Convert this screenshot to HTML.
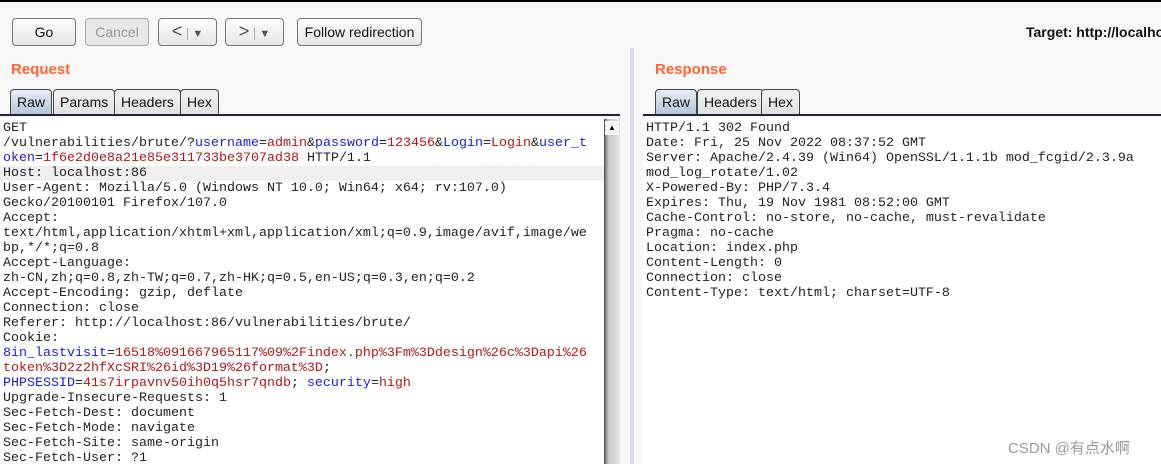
<!DOCTYPE html>
<html><head><meta charset="utf-8"><style>
*{margin:0;padding:0;box-sizing:border-box}
html,body{width:1161px;height:464px;overflow:hidden}
body{background:#f8f8f8;font-family:"Liberation Sans",Arial,sans-serif;position:relative;border-top:2px solid #000}
.btn{position:absolute;top:16px;height:28px;border:1px solid #777;border-radius:4px;background:linear-gradient(#fdfdfd,#e6e6e6);font-size:14px;text-align:center;line-height:26px;color:#111}
.dis{color:#999;border-color:#aaa;background:#e8e8e8}
.title{position:absolute;top:59px;color:#ff6633;font-weight:bold;font-size:15px}
.tab{position:absolute;top:87px;height:26px;border:1px solid #444;border-bottom:none;border-radius:4px 4px 0 0;background:linear-gradient(#f4f4f4,#e0e0e0);font-size:14px;line-height:25px;padding:0 6px;color:#111}
.tab.sel{background:linear-gradient(#e8eef4,#b0c4d8)}
.line{position:absolute;top:112px;height:2px;background:#223}
.code{position:absolute;top:116px;padding-top:3px;background:#fff;font-family:"Liberation Mono","Courier New",monospace;font-size:13.33px;line-height:15px;color:#222;overflow:hidden}
.code div{height:15px;padding-left:3px;white-space:pre}
.b{color:#1a1adc}.r{color:#b01818}
</style></head><body>
<div class="btn" style="left:12px;width:64px">Go</div>
<div class="btn dis" style="left:85px;width:64px">Cancel</div>
<div class="btn" style="left:158px;width:59px;font-size:18px;line-height:24px;color:#555">&lt; <span style="font-size:11px;border-left:1px solid #aaa;padding-left:4px">▼</span></div>
<div class="btn" style="left:225px;width:59px;font-size:18px;line-height:24px;color:#555">&gt; <span style="font-size:11px;border-left:1px solid #aaa;padding-left:4px">▼</span></div>
<div class="btn" style="left:297px;width:125px">Follow redirection</div>
<div style="position:absolute;left:1026px;top:22px;font-weight:bold;font-size:14px;color:#111;white-space:nowrap">Target: http://localhost</div>
<div style="position:absolute;left:630px;top:46px;width:4px;height:416px;background:#dde0e4"></div>
<div class="title" style="left:11px">Request</div>
<div class="title" style="left:655px">Response</div>
<div class="tab sel" style="left:10px">Raw</div>
<div class="tab" style="left:53px">Params</div>
<div class="tab" style="left:114px">Headers</div>
<div class="tab" style="left:180px">Hex</div>
<div class="tab sel" style="left:655px">Raw</div>
<div class="tab" style="left:697px">Headers</div>
<div class="tab" style="left:761px">Hex</div>
<div class="line" style="left:0;width:620px"></div>
<div class="line" style="left:643px;width:518px"></div>
<div class="code" style="left:0;width:604px;height:346px"><div>GET</div><div>/vulnerabilities/brute/?<span class="b">username</span>=<span class="r">admin</span>&amp;<span class="b">password</span>=<span class="r">123456</span>&amp;<span class="b">Login</span>=<span class="r">Login</span>&amp;<span class="b">user_t</span></div><div><span class="b">oken</span>=<span class="r">1f6e2d0e8a21e85e311733be3707ad38</span> HTTP/1.1</div><div style="background:#efefef">Host: localhost:86</div><div>User-Agent: Mozilla/5.0 (Windows NT 10.0; Win64; x64; rv:107.0)</div><div>Gecko/20100101 Firefox/107.0</div><div>Accept:</div><div>text/html,application/xhtml+xml,application/xml;q=0.9,image/avif,image/we</div><div>bp,*/*;q=0.8</div><div>Accept-Language:</div><div>zh-CN,zh;q=0.8,zh-TW;q=0.7,zh-HK;q=0.5,en-US;q=0.3,en;q=0.2</div><div>Accept-Encoding: gzip, deflate</div><div>Connection: close</div><div>Referer: http://localhost:86/vulnerabilities/brute/</div><div>Cookie:</div><div><span class="b">8in_lastvisit</span>=<span class="r">16518%091667965117%09%2Findex.php%3Fm%3Ddesign%26c%3Dapi%26</span></div><div><span class="r">token%3D2z2hfXcSRI%26id%3D19%26format%3D</span>;</div><div><span class="b">PHPSESSID</span>=<span class="r">41s7irpavnv50ih0q5hsr7qndb</span>; <span class="b">security</span>=<span class="r">high</span></div><div>Upgrade-Insecure-Requests: 1</div><div>Sec-Fetch-Dest: document</div><div>Sec-Fetch-Mode: navigate</div><div>Sec-Fetch-Site: same-origin</div><div>Sec-Fetch-User: ?1</div></div>
<div style="position:absolute;left:604px;top:117px;width:16px;height:345px;background:linear-gradient(90deg,#777,#c8c8c8 25%,#e6e6e6);border-left:1px solid #555"></div>
<div style="position:absolute;left:605px;top:119px;width:14px;height:14px;background:#f4f4f4;font-size:8px;text-align:center;line-height:14px">▲</div>
<div class="code" style="left:643px;width:518px;height:346px"><div>HTTP/1.1 302 Found</div><div>Date: Fri, 25 Nov 2022 08:37:52 GMT</div><div>Server: Apache/2.4.39 (Win64) OpenSSL/1.1.1b mod_fcgid/2.3.9a</div><div>mod_log_rotate/1.02</div><div>X-Powered-By: PHP/7.3.4</div><div>Expires: Thu, 19 Nov 1981 08:52:00 GMT</div><div>Cache-Control: no-store, no-cache, must-revalidate</div><div>Pragma: no-cache</div><div>Location: index.php</div><div>Content-Length: 0</div><div>Connection: close</div><div>Content-Type: text/html; charset=UTF-8</div></div>
<div style="position:absolute;left:1008px;top:435px;font-family:'Liberation Sans','Noto Sans CJK SC',sans-serif;font-size:15px;color:#999">CSDN @有点水啊</div>
</body></html>
